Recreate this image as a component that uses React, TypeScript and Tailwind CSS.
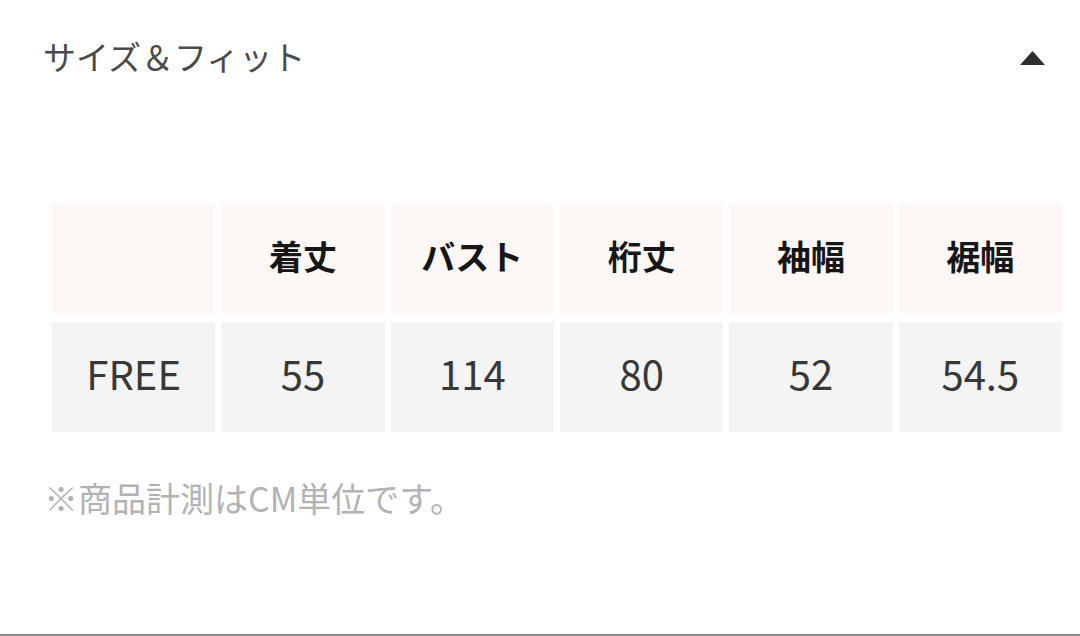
import React from 'react';

const headers = ['', '着丈', 'バスト', '桁丈', '袖幅', '裾幅'];
const values = ['FREE', '55', '114', '80', '52', '54.5'];

const jp = "font-['Noto_Sans_CJK_JP','Noto_Sans',sans-serif]";

export default function App() {
  return (
    <div className={`w-[1080px] h-[636px] bg-white flex flex-col ${jp}`}>
      {/* Header */}
      <div className="flex items-center justify-between pl-[43px] pr-[35px] pt-[36px]">
        <span className="text-[33px] leading-[40px] text-[#4a4a4a]">サイズ＆フィット</span>
        <svg width="25" height="14" viewBox="0 0 25 14" className="mt-[4px]">
          <path d="M12.5 0 L25 14 L0 14 Z" fill="#2f2f2f" />
        </svg>
      </div>

      {/* Size table */}
      <div className="ml-[52px] mt-[127px] w-[1010px] grid grid-cols-6 gap-x-[6px] gap-y-[9px]">
        {headers.map((h, i) => (
          <div
            key={'h' + i}
            className="h-[110px] pb-[6px] bg-[#fdf7f5] flex items-center justify-center text-[34px] font-bold text-[#161616]"
          >
            {h}
          </div>
        ))}
        {values.map((v, i) => (
          <div
            key={'v' + i}
            className="h-[110px] pb-[8px] bg-[#f4f4f4] flex items-center justify-center text-[40px] text-[#383838]"
          >
            {v}
          </div>
        ))}
      </div>

      {/* Note */}
      <p className="pl-[44px] mt-[46px] text-[34px] leading-[40px] text-[#b3b3b3]">※商品計測はCM単位です。</p>

      <div className="mt-auto h-[2px] bg-[#8c8c8c]" />
    </div>
  );
}
